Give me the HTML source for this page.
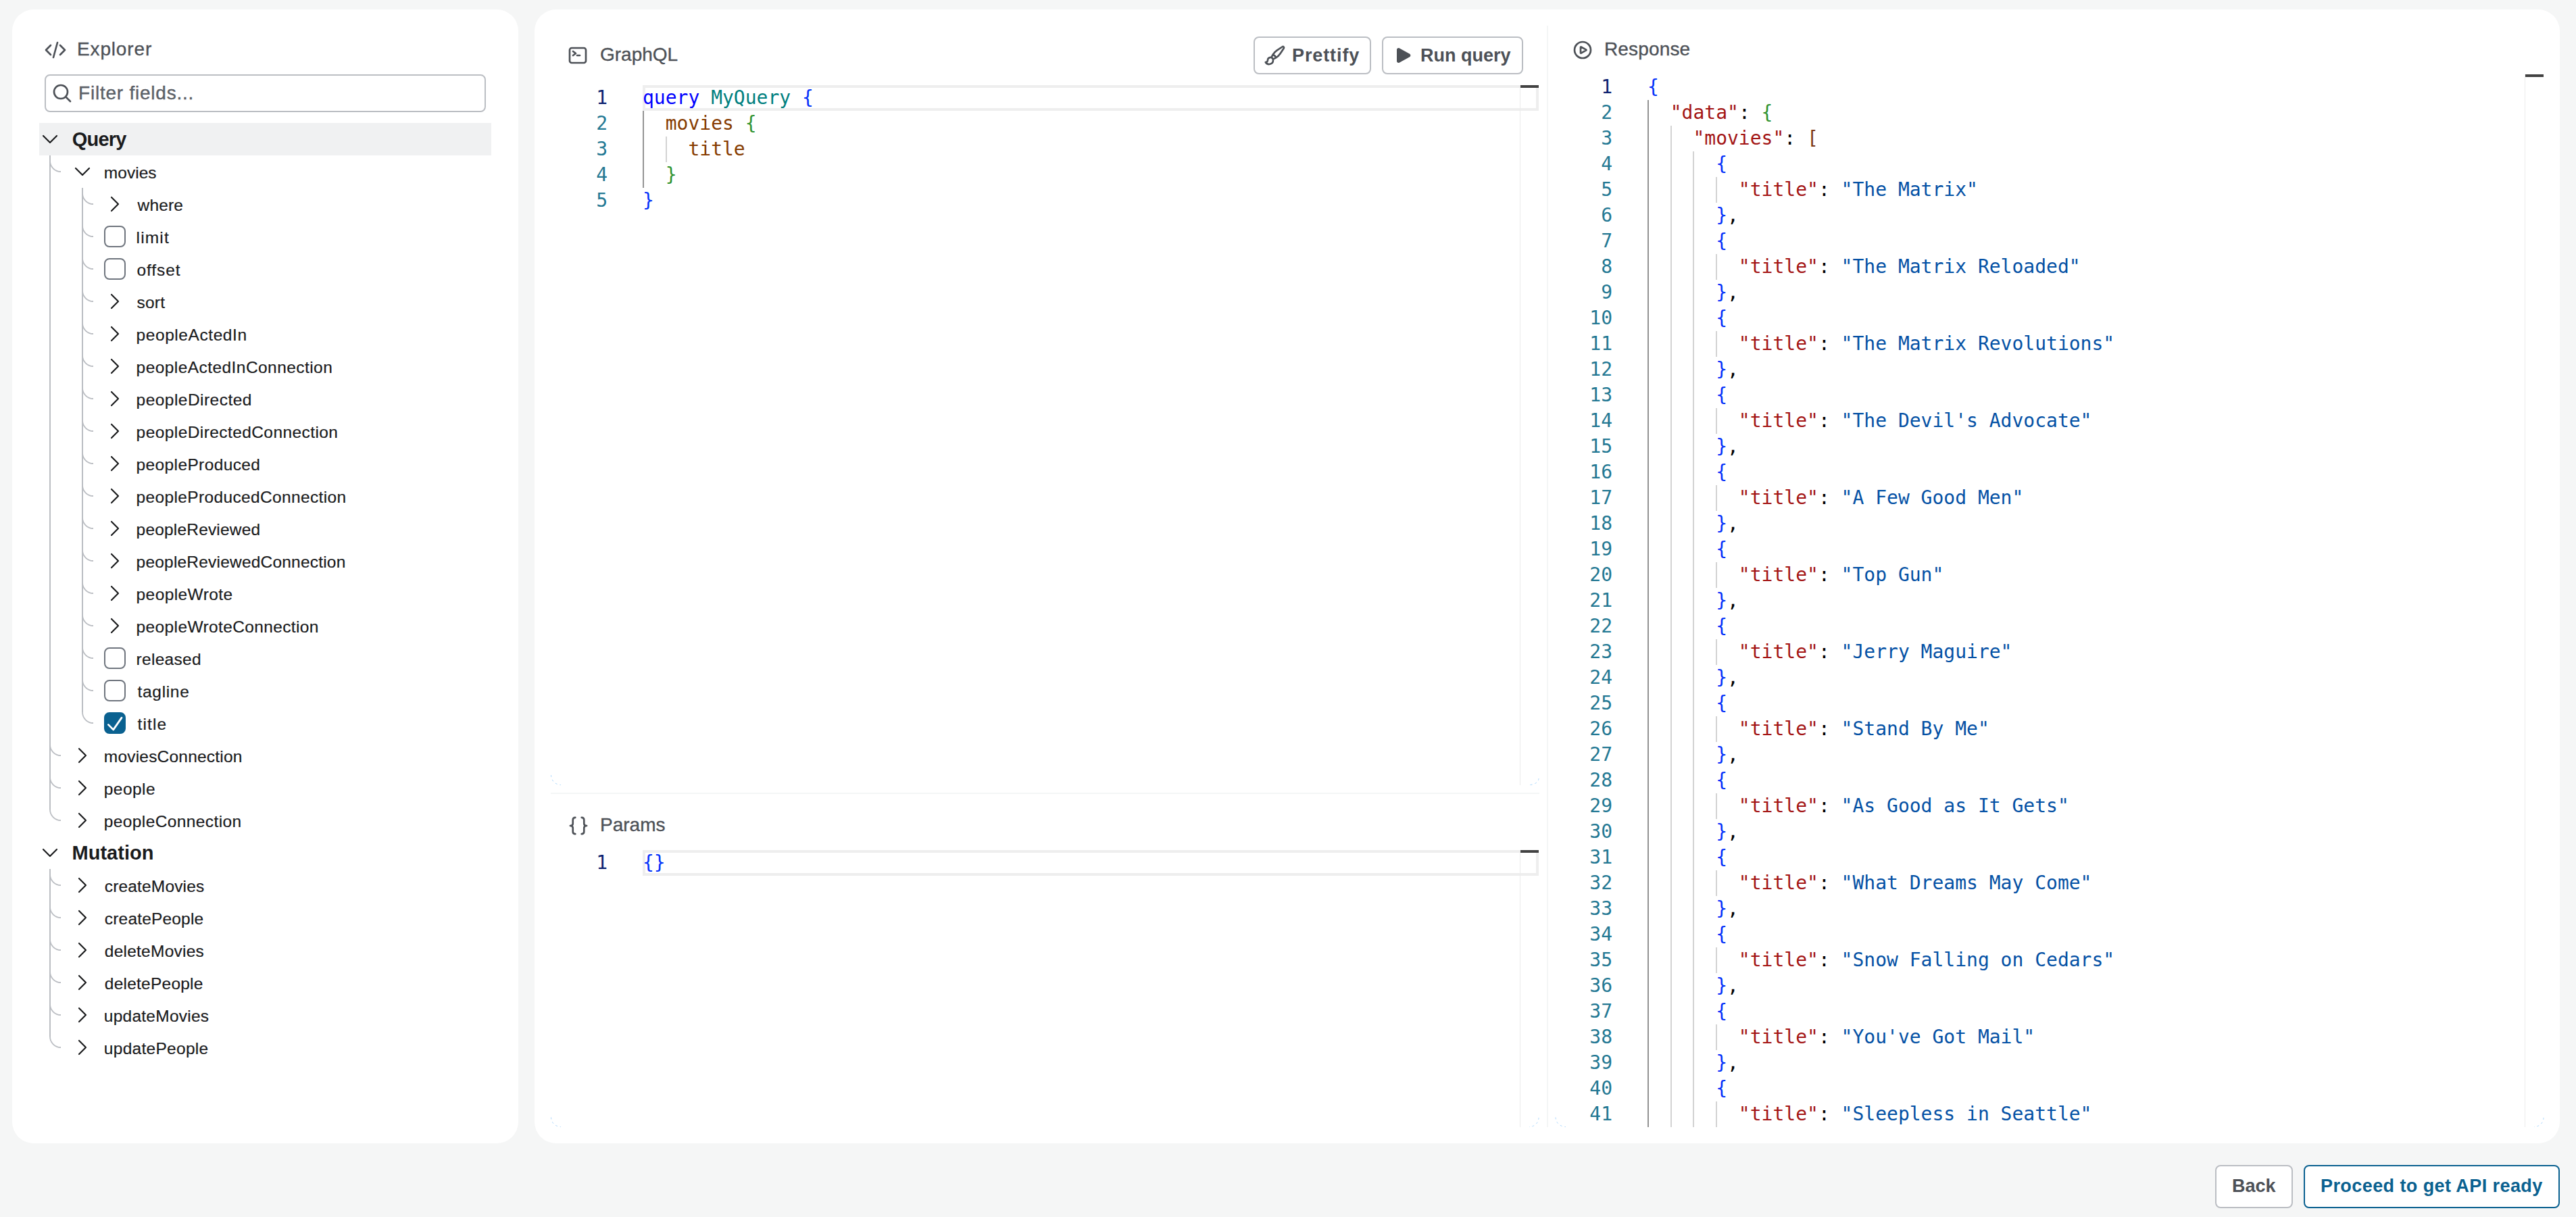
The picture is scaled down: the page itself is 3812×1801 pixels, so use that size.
<!DOCTYPE html>
<html lang="en"><head><meta charset="utf-8"><title>GraphQL Explorer</title>
<meta name="viewport" content="width=3812">
<style>
*{box-sizing:border-box}
html,body{margin:0;padding:0}
body{width:3812px;height:1801px;overflow:hidden;position:relative;background:#f5f6f6;
 font-family:"Liberation Sans",sans-serif;color:#1a1b1d;-webkit-font-smoothing:antialiased}
.abs,.panel,.t,.row,.lbl,.hd,.btn,.ln,.cl,.g,.cb,svg{position:absolute}
.panel{background:#fff;border-radius:32px}
.hd{font-size:28px;line-height:32px;height:32px;color:#4d5157;white-space:nowrap;-webkit-text-stroke:.35px #4d5157}
.lbl{font-size:24.5px;line-height:48px;height:48px;white-space:nowrap;color:#1a1b1d;-webkit-text-stroke:.2px #1a1b1d}
.lbl.b{font-size:29px;font-weight:700;-webkit-text-stroke:0}
.cb{width:32px;height:32px;border:2px solid #6f757e;border-radius:8px;background:#fff}
.cb.on{background:#0a6190;border-color:#0a6190}
.btn{height:56px;border:2px solid #bbbec3;border-radius:8px;background:#fff;color:#4d5157;
 font-weight:700;font-size:27px;line-height:52px;white-space:nowrap}
.btn span{position:absolute;top:0}
.mono{font-family:"DejaVu Sans Mono","Liberation Mono",monospace;font-size:28px;line-height:38px;white-space:pre}
.ln{height:38px;width:80px;text-align:right;color:#237893}
.ln.a{color:#0b216f}
.cl{height:38px;color:#000}
.g{width:2px;background:#d3d3d3}
.g.a{background:#939393}
.kw{color:#0000ff}.ty{color:#008080}.b1{color:#0431fa}.b2{color:#319331}.b3{color:#7b3814}
.id{color:#863b00}.k{color:#a31515}.s{color:#0451a5}.d{color:#000}
.curline{position:absolute;height:38px;border:4px solid #eeeeee}
.mark{position:absolute;height:4px;width:27px;background:#424242}
.vline{position:absolute;width:1px;background:#ebebeb}
</style></head><body>
<div class="panel" style="left:18px;top:14px;width:749px;height:1678px"></div>
<div class="panel" style="left:791px;top:14px;width:2997px;height:1678px"></div>
<svg style="left:66px;top:57.6px" width="32" height="32" viewBox="0 0 24 24" fill="none" stroke="#4d5157" stroke-width="2.0" stroke-linecap="round" stroke-linejoin="round"><path d="M17.25 6.75 22.5 12l-5.25 5.25m-10.5 0L1.5 12l5.25-5.25m7.5-3-4.5 16.5"/></svg>
<div class="hd" style="left:114px;top:57px;letter-spacing:.85px">Explorer</div>
<div class="abs" style="left:66px;top:110px;width:653px;height:56px;border:2px solid #bbbec3;border-radius:8px;background:#fff"></div>
<svg style="left:76px;top:122px" width="32" height="32" viewBox="0 0 24 24" fill="none" stroke="#4d5157" stroke-width="2.0" stroke-linecap="round" stroke-linejoin="round"><path d="m21 21-5.197-5.197m0 0A7.5 7.5 0 1 0 5.196 5.196a7.5 7.5 0 0 0 10.607 10.607Z"/></svg>
<div class="hd" style="left:116px;top:122px;color:#5e636a;letter-spacing:.78px">Filter fields...</div>
<div class="abs" style="left:58px;top:182px;width:669px;height:48px;background:#f0f1f2"></div>
<svg style="left:0;top:0" width="800" height="1700" viewBox="0 0 800 1700" fill="none"><path d="M74 230V1198M122 278V1054M74 1286V1534" stroke="#bbbec3" stroke-width="2"/><path d="M74 238A16 16 0 0 0 90 254M74 1102A16 16 0 0 0 90 1118M74 1150A16 16 0 0 0 90 1166M74 1198A16 16 0 0 0 90 1214M122 286A16 16 0 0 0 138 302M122 334A16 16 0 0 0 138 350M122 382A16 16 0 0 0 138 398M122 430A16 16 0 0 0 138 446M122 478A16 16 0 0 0 138 494M122 526A16 16 0 0 0 138 542M122 574A16 16 0 0 0 138 590M122 622A16 16 0 0 0 138 638M122 670A16 16 0 0 0 138 686M122 718A16 16 0 0 0 138 734M122 766A16 16 0 0 0 138 782M122 814A16 16 0 0 0 138 830M122 862A16 16 0 0 0 138 878M122 910A16 16 0 0 0 138 926M122 958A16 16 0 0 0 138 974M122 1006A16 16 0 0 0 138 1022M122 1054A16 16 0 0 0 138 1070M74 1294A16 16 0 0 0 90 1310M74 1342A16 16 0 0 0 90 1358M74 1390A16 16 0 0 0 90 1406M74 1438A16 16 0 0 0 90 1454M74 1486A16 16 0 0 0 90 1502M74 1534A16 16 0 0 0 90 1550" stroke="#bbbec3" stroke-width="1.8"/></svg>
<svg style="left:58px;top:190px" width="32" height="32" viewBox="0 0 24 24" fill="none" stroke="#1a1b1d" stroke-width="1.6" stroke-linecap="round" stroke-linejoin="round"><path d="m19.5 8.25-7.5 7.5-7.5-7.5"/></svg>
<div class="lbl b" style="left:106.8px;top:182px;letter-spacing:-0.8px">Query</div>
<svg style="left:106px;top:238px" width="32" height="32" viewBox="0 0 24 24" fill="none" stroke="#1a1b1d" stroke-width="1.6" stroke-linecap="round" stroke-linejoin="round"><path d="m19.5 8.25-7.5 7.5-7.5-7.5"/></svg>
<div class="lbl" style="left:153.8px;top:232px;letter-spacing:0.04px">movies</div>
<svg style="left:154px;top:286px" width="32" height="32" viewBox="0 0 24 24" fill="none" stroke="#1a1b1d" stroke-width="1.6" stroke-linecap="round" stroke-linejoin="round"><path d="m8.25 4.5 7.5 7.5-7.5 7.5"/></svg>
<div class="lbl" style="left:203.6px;top:280px;letter-spacing:0.15px">where</div>
<div class="cb" style="left:154px;top:334px"></div>
<div class="lbl" style="left:201.6px;top:328px;letter-spacing:1.15px">limit</div>
<div class="cb" style="left:154px;top:382px"></div>
<div class="lbl" style="left:202.6px;top:376px;letter-spacing:0.88px">offset</div>
<svg style="left:154px;top:430px" width="32" height="32" viewBox="0 0 24 24" fill="none" stroke="#1a1b1d" stroke-width="1.6" stroke-linecap="round" stroke-linejoin="round"><path d="m8.25 4.5 7.5 7.5-7.5 7.5"/></svg>
<div class="lbl" style="left:202.6px;top:424px;letter-spacing:0.201px">sort</div>
<svg style="left:154px;top:478px" width="32" height="32" viewBox="0 0 24 24" fill="none" stroke="#1a1b1d" stroke-width="1.6" stroke-linecap="round" stroke-linejoin="round"><path d="m8.25 4.5 7.5 7.5-7.5 7.5"/></svg>
<div class="lbl" style="left:201.6px;top:472px;letter-spacing:0.564px">peopleActedIn</div>
<svg style="left:154px;top:526px" width="32" height="32" viewBox="0 0 24 24" fill="none" stroke="#1a1b1d" stroke-width="1.6" stroke-linecap="round" stroke-linejoin="round"><path d="m8.25 4.5 7.5 7.5-7.5 7.5"/></svg>
<div class="lbl" style="left:201.6px;top:520px;letter-spacing:0.436px">peopleActedInConnection</div>
<svg style="left:154px;top:574px" width="32" height="32" viewBox="0 0 24 24" fill="none" stroke="#1a1b1d" stroke-width="1.6" stroke-linecap="round" stroke-linejoin="round"><path d="m8.25 4.5 7.5 7.5-7.5 7.5"/></svg>
<div class="lbl" style="left:201.6px;top:568px;letter-spacing:0.462px">peopleDirected</div>
<svg style="left:154px;top:622px" width="32" height="32" viewBox="0 0 24 24" fill="none" stroke="#1a1b1d" stroke-width="1.6" stroke-linecap="round" stroke-linejoin="round"><path d="m8.25 4.5 7.5 7.5-7.5 7.5"/></svg>
<div class="lbl" style="left:201.6px;top:616px;letter-spacing:0.418px">peopleDirectedConnection</div>
<svg style="left:154px;top:670px" width="32" height="32" viewBox="0 0 24 24" fill="none" stroke="#1a1b1d" stroke-width="1.6" stroke-linecap="round" stroke-linejoin="round"><path d="m8.25 4.5 7.5 7.5-7.5 7.5"/></svg>
<div class="lbl" style="left:201.6px;top:664px;letter-spacing:0.372px">peopleProduced</div>
<svg style="left:154px;top:718px" width="32" height="32" viewBox="0 0 24 24" fill="none" stroke="#1a1b1d" stroke-width="1.6" stroke-linecap="round" stroke-linejoin="round"><path d="m8.25 4.5 7.5 7.5-7.5 7.5"/></svg>
<div class="lbl" style="left:201.6px;top:712px;letter-spacing:0.355px">peopleProducedConnection</div>
<svg style="left:154px;top:766px" width="32" height="32" viewBox="0 0 24 24" fill="none" stroke="#1a1b1d" stroke-width="1.6" stroke-linecap="round" stroke-linejoin="round"><path d="m8.25 4.5 7.5 7.5-7.5 7.5"/></svg>
<div class="lbl" style="left:201.6px;top:760px;letter-spacing:0.181px">peopleReviewed</div>
<svg style="left:154px;top:814px" width="32" height="32" viewBox="0 0 24 24" fill="none" stroke="#1a1b1d" stroke-width="1.6" stroke-linecap="round" stroke-linejoin="round"><path d="m8.25 4.5 7.5 7.5-7.5 7.5"/></svg>
<div class="lbl" style="left:201.6px;top:808px;letter-spacing:0.199px">peopleReviewedConnection</div>
<svg style="left:154px;top:862px" width="32" height="32" viewBox="0 0 24 24" fill="none" stroke="#1a1b1d" stroke-width="1.6" stroke-linecap="round" stroke-linejoin="round"><path d="m8.25 4.5 7.5 7.5-7.5 7.5"/></svg>
<div class="lbl" style="left:201.6px;top:856px;letter-spacing:0.4px">peopleWrote</div>
<svg style="left:154px;top:910px" width="32" height="32" viewBox="0 0 24 24" fill="none" stroke="#1a1b1d" stroke-width="1.6" stroke-linecap="round" stroke-linejoin="round"><path d="m8.25 4.5 7.5 7.5-7.5 7.5"/></svg>
<div class="lbl" style="left:201.6px;top:904px;letter-spacing:0.37px">peopleWroteConnection</div>
<div class="cb" style="left:154px;top:958px"></div>
<div class="lbl" style="left:201.6px;top:952px;letter-spacing:0.286px">released</div>
<div class="cb" style="left:154px;top:1006px"></div>
<div class="lbl" style="left:203.6px;top:1000px;letter-spacing:0.665px">tagline</div>
<div class="cb on" style="left:154px;top:1054px"></div>
<svg style="left:154px;top:1054px" width="32" height="32" viewBox="0 0 32 32" fill="none" stroke="#fff" stroke-width="2.75" stroke-linecap="round" stroke-linejoin="round"><path d="M6.3 18.4L13.7 25.9L26 8.1"/></svg>
<div class="lbl" style="left:203.6px;top:1048px;letter-spacing:1.1px">title</div>
<svg style="left:106px;top:1102px" width="32" height="32" viewBox="0 0 24 24" fill="none" stroke="#1a1b1d" stroke-width="1.6" stroke-linecap="round" stroke-linejoin="round"><path d="m8.25 4.5 7.5 7.5-7.5 7.5"/></svg>
<div class="lbl" style="left:153.8px;top:1096px;letter-spacing:0.2px">moviesConnection</div>
<svg style="left:106px;top:1150px" width="32" height="32" viewBox="0 0 24 24" fill="none" stroke="#1a1b1d" stroke-width="1.6" stroke-linecap="round" stroke-linejoin="round"><path d="m8.25 4.5 7.5 7.5-7.5 7.5"/></svg>
<div class="lbl" style="left:153.8px;top:1144px;letter-spacing:0.44px">people</div>
<svg style="left:106px;top:1198px" width="32" height="32" viewBox="0 0 24 24" fill="none" stroke="#1a1b1d" stroke-width="1.6" stroke-linecap="round" stroke-linejoin="round"><path d="m8.25 4.5 7.5 7.5-7.5 7.5"/></svg>
<div class="lbl" style="left:153.8px;top:1192px;letter-spacing:0.385px">peopleConnection</div>
<svg style="left:58px;top:1246px" width="32" height="32" viewBox="0 0 24 24" fill="none" stroke="#1a1b1d" stroke-width="1.6" stroke-linecap="round" stroke-linejoin="round"><path d="m19.5 8.25-7.5 7.5-7.5-7.5"/></svg>
<div class="lbl b" style="left:106.6px;top:1238px;letter-spacing:-0.002px">Mutation</div>
<svg style="left:106px;top:1294px" width="32" height="32" viewBox="0 0 24 24" fill="none" stroke="#1a1b1d" stroke-width="1.6" stroke-linecap="round" stroke-linejoin="round"><path d="m8.25 4.5 7.5 7.5-7.5 7.5"/></svg>
<div class="lbl" style="left:154.8px;top:1288px;letter-spacing:0.159px">createMovies</div>
<svg style="left:106px;top:1342px" width="32" height="32" viewBox="0 0 24 24" fill="none" stroke="#1a1b1d" stroke-width="1.6" stroke-linecap="round" stroke-linejoin="round"><path d="m8.25 4.5 7.5 7.5-7.5 7.5"/></svg>
<div class="lbl" style="left:154.8px;top:1336px;letter-spacing:0.182px">createPeople</div>
<svg style="left:106px;top:1390px" width="32" height="32" viewBox="0 0 24 24" fill="none" stroke="#1a1b1d" stroke-width="1.6" stroke-linecap="round" stroke-linejoin="round"><path d="m8.25 4.5 7.5 7.5-7.5 7.5"/></svg>
<div class="lbl" style="left:154.8px;top:1384px;letter-spacing:0.239px">deleteMovies</div>
<svg style="left:106px;top:1438px" width="32" height="32" viewBox="0 0 24 24" fill="none" stroke="#1a1b1d" stroke-width="1.6" stroke-linecap="round" stroke-linejoin="round"><path d="m8.25 4.5 7.5 7.5-7.5 7.5"/></svg>
<div class="lbl" style="left:154.8px;top:1432px;letter-spacing:0.233px">deletePeople</div>
<svg style="left:106px;top:1486px" width="32" height="32" viewBox="0 0 24 24" fill="none" stroke="#1a1b1d" stroke-width="1.6" stroke-linecap="round" stroke-linejoin="round"><path d="m8.25 4.5 7.5 7.5-7.5 7.5"/></svg>
<div class="lbl" style="left:153.8px;top:1480px;letter-spacing:0.25px">updateMovies</div>
<svg style="left:106px;top:1534px" width="32" height="32" viewBox="0 0 24 24" fill="none" stroke="#1a1b1d" stroke-width="1.6" stroke-linecap="round" stroke-linejoin="round"><path d="m8.25 4.5 7.5 7.5-7.5 7.5"/></svg>
<div class="lbl" style="left:153.8px;top:1528px;letter-spacing:0.29px">updatePeople</div>
<svg style="left:839px;top:66px" width="32" height="32" viewBox="0 0 24 24" fill="none" stroke="#4d5157" stroke-width="2.0" stroke-linecap="round" stroke-linejoin="round"><path d="m6.75 7.5 3 2.25-3 2.25m4.5 0h3m-9 8.25h13.5A2.25 2.25 0 0 0 21 18V6a2.25 2.25 0 0 0-2.25-2.25H5.25A2.25 2.25 0 0 0 3 6v12a2.25 2.25 0 0 0 2.25 2.25Z"/></svg>
<div class="hd" style="left:888px;top:65px">GraphQL</div>
<div class="btn" style="left:1855px;top:54px;width:174px"><span style="left:55px;letter-spacing:.9px">Prettify</span></div>
<svg style="left:1871px;top:66px" width="32" height="32" viewBox="0 0 24 24" fill="none" stroke="#4d5157" stroke-width="2.0" stroke-linecap="round" stroke-linejoin="round"><path d="M9.53 16.122a3 3 0 0 0-5.78 1.128 2.25 2.25 0 0 1-2.4 2.245 4.5 4.5 0 0 0 8.4-2.245c0-.399-.078-.78-.22-1.128Zm0 0a15.998 15.998 0 0 0 3.388-1.62m-5.043-.025a15.994 15.994 0 0 1 1.622-3.395m3.42 3.42a15.995 15.995 0 0 0 4.764-4.648l3.876-5.814a1.151 1.151 0 0 0-1.597-1.597L14.146 6.32a15.996 15.996 0 0 0-4.649 4.763m3.42 3.42a6.776 6.776 0 0 0-3.42-3.42"/></svg>
<div class="btn" style="left:2045px;top:54px;width:209px"><span style="left:55px">Run query</span></div>
<svg style="left:2061px;top:66px" width="32" height="32" viewBox="0 0 24 24" fill="#4d5157" stroke="#4d5157" stroke-width="0" stroke-linecap="round" stroke-linejoin="round"><path d="M4.5 5.653c0-1.427 1.529-2.33 2.779-1.643l11.54 6.347c1.295.712 1.295 2.573 0 3.286L7.28 19.99c-1.25.687-2.779-.217-2.779-1.643V5.653Z"/></svg>
<div class="curline" style="left:951px;top:126px;width:1326px"></div>
<div class="vline" style="left:2249px;top:126px;height:1036px"></div>
<div class="mark" style="left:2250px;top:126px"></div>
<div class="g a" style="left:951px;top:164px;height:114px"></div>
<div class="g" style="left:985px;top:202px;height:38px"></div>
<div class="ln mono a" style="left:819px;top:126px">1</div>
<div class="cl mono" style="left:951px;top:126px"><span class="kw">query</span> <span class="ty">MyQuery</span> <span class="b1">{</span></div>
<div class="ln mono" style="left:819px;top:164px">2</div>
<div class="cl mono" style="left:951px;top:164px">  <span class="id">movies</span> <span class="b2">{</span></div>
<div class="ln mono" style="left:819px;top:202px">3</div>
<div class="cl mono" style="left:951px;top:202px">    <span class="id">title</span></div>
<div class="ln mono" style="left:819px;top:240px">4</div>
<div class="cl mono" style="left:951px;top:240px">  <span class="b2">}</span></div>
<div class="ln mono" style="left:819px;top:278px">5</div>
<div class="cl mono" style="left:951px;top:278px"><span class="b1">}</span></div>
<div class="abs" style="left:815px;top:1173px;width:1463px;height:2px;background:#f4f6f6"></div>
<svg style="left:839.6px;top:1206px" width="32" height="32" viewBox="0 0 24 24" fill="none" stroke="#4d5157" stroke-width="2.0" stroke-linecap="round" stroke-linejoin="round"><path d="M8.5 2.9C6.5 2.9 5.8 3.6 5.8 5.5V9.6C5.8 11.1 4.6 12 2.9 12C4.6 12 5.8 12.9 5.8 14.4V18.5C5.8 20.4 6.5 21.1 8.5 21.1"/><path d="M15.5 2.9C17.5 2.9 18.2 3.6 18.2 5.5V9.6C18.2 11.1 19.4 12 21.1 12C19.4 12 18.2 12.9 18.2 14.4V18.5C18.2 20.4 17.5 21.1 15.5 21.1"/></svg>
<div class="hd" style="left:888px;top:1205px">Params</div>
<div class="curline" style="left:951px;top:1258px;width:1326px"></div>
<div class="vline" style="left:2249px;top:1258px;height:410px"></div>
<div class="mark" style="left:2250px;top:1258px"></div>
<div class="ln mono a" style="left:819px;top:1258px">1</div>
<div class="cl mono" style="left:951px;top:1258px"><span class="b1">{}</span></div>
<div class="vline" style="left:2289px;top:38px;height:1630px;width:2px;background:#f4f6f6"></div>
<svg style="left:2326px;top:58px" width="32" height="32" viewBox="0 0 24 24" fill="none" stroke="#4d5157" stroke-width="2.0" stroke-linecap="round" stroke-linejoin="round"><path d="M21 12a9 9 0 1 1-18 0 9 9 0 0 1 18 0Z"/><path d="M15.91 11.672a.375.375 0 0 1 0 .656l-5.603 3.113a.375.375 0 0 1-.557-.328V8.887c0-.286.307-.466.557-.327l5.603 3.112Z"/></svg>
<div class="hd" style="left:2374px;top:57px;letter-spacing:.15px">Response</div>
<div class="abs" style="left:2300px;top:110px;width:1480px;height:1558px;overflow:hidden">
<div class="abs" style="left:-2300px;top:-110px;width:0;height:0"><div class="g a" style="left:2438px;top:148px;height:1600px"></div><div class="g" style="left:2472px;top:186px;height:1600px"></div><div class="g" style="left:2505px;top:224px;height:1600px"></div><div class="g" style="left:2539px;top:262px;height:38px"></div><div class="g" style="left:2539px;top:376px;height:38px"></div><div class="g" style="left:2539px;top:490px;height:38px"></div><div class="g" style="left:2539px;top:604px;height:38px"></div><div class="g" style="left:2539px;top:718px;height:38px"></div><div class="g" style="left:2539px;top:832px;height:38px"></div><div class="g" style="left:2539px;top:946px;height:38px"></div><div class="g" style="left:2539px;top:1060px;height:38px"></div><div class="g" style="left:2539px;top:1174px;height:38px"></div><div class="g" style="left:2539px;top:1288px;height:38px"></div><div class="g" style="left:2539px;top:1402px;height:38px"></div><div class="g" style="left:2539px;top:1516px;height:38px"></div><div class="g" style="left:2539px;top:1630px;height:38px"></div><div class="ln mono a" style="left:2306px;top:110px">1</div><div class="cl mono" style="left:2438px;top:110px"><span class="b1">{</span></div><div class="ln mono" style="left:2306px;top:148px">2</div><div class="cl mono" style="left:2438px;top:148px">  <span class="k">"data"</span><span class="d">:</span> <span class="b2">{</span></div><div class="ln mono" style="left:2306px;top:186px">3</div><div class="cl mono" style="left:2438px;top:186px">    <span class="k">"movies"</span><span class="d">:</span> <span class="b3">[</span></div><div class="ln mono" style="left:2306px;top:224px">4</div><div class="cl mono" style="left:2438px;top:224px">      <span class="b1">{</span></div><div class="ln mono" style="left:2306px;top:262px">5</div><div class="cl mono" style="left:2438px;top:262px">        <span class="k">"title"</span><span class="d">:</span> <span class="s">"The Matrix"</span></div><div class="ln mono" style="left:2306px;top:300px">6</div><div class="cl mono" style="left:2438px;top:300px">      <span class="b1">}</span><span class="d">,</span></div><div class="ln mono" style="left:2306px;top:338px">7</div><div class="cl mono" style="left:2438px;top:338px">      <span class="b1">{</span></div><div class="ln mono" style="left:2306px;top:376px">8</div><div class="cl mono" style="left:2438px;top:376px">        <span class="k">"title"</span><span class="d">:</span> <span class="s">"The Matrix Reloaded"</span></div><div class="ln mono" style="left:2306px;top:414px">9</div><div class="cl mono" style="left:2438px;top:414px">      <span class="b1">}</span><span class="d">,</span></div><div class="ln mono" style="left:2306px;top:452px">10</div><div class="cl mono" style="left:2438px;top:452px">      <span class="b1">{</span></div><div class="ln mono" style="left:2306px;top:490px">11</div><div class="cl mono" style="left:2438px;top:490px">        <span class="k">"title"</span><span class="d">:</span> <span class="s">"The Matrix Revolutions"</span></div><div class="ln mono" style="left:2306px;top:528px">12</div><div class="cl mono" style="left:2438px;top:528px">      <span class="b1">}</span><span class="d">,</span></div><div class="ln mono" style="left:2306px;top:566px">13</div><div class="cl mono" style="left:2438px;top:566px">      <span class="b1">{</span></div><div class="ln mono" style="left:2306px;top:604px">14</div><div class="cl mono" style="left:2438px;top:604px">        <span class="k">"title"</span><span class="d">:</span> <span class="s">"The Devil's Advocate"</span></div><div class="ln mono" style="left:2306px;top:642px">15</div><div class="cl mono" style="left:2438px;top:642px">      <span class="b1">}</span><span class="d">,</span></div><div class="ln mono" style="left:2306px;top:680px">16</div><div class="cl mono" style="left:2438px;top:680px">      <span class="b1">{</span></div><div class="ln mono" style="left:2306px;top:718px">17</div><div class="cl mono" style="left:2438px;top:718px">        <span class="k">"title"</span><span class="d">:</span> <span class="s">"A Few Good Men"</span></div><div class="ln mono" style="left:2306px;top:756px">18</div><div class="cl mono" style="left:2438px;top:756px">      <span class="b1">}</span><span class="d">,</span></div><div class="ln mono" style="left:2306px;top:794px">19</div><div class="cl mono" style="left:2438px;top:794px">      <span class="b1">{</span></div><div class="ln mono" style="left:2306px;top:832px">20</div><div class="cl mono" style="left:2438px;top:832px">        <span class="k">"title"</span><span class="d">:</span> <span class="s">"Top Gun"</span></div><div class="ln mono" style="left:2306px;top:870px">21</div><div class="cl mono" style="left:2438px;top:870px">      <span class="b1">}</span><span class="d">,</span></div><div class="ln mono" style="left:2306px;top:908px">22</div><div class="cl mono" style="left:2438px;top:908px">      <span class="b1">{</span></div><div class="ln mono" style="left:2306px;top:946px">23</div><div class="cl mono" style="left:2438px;top:946px">        <span class="k">"title"</span><span class="d">:</span> <span class="s">"Jerry Maguire"</span></div><div class="ln mono" style="left:2306px;top:984px">24</div><div class="cl mono" style="left:2438px;top:984px">      <span class="b1">}</span><span class="d">,</span></div><div class="ln mono" style="left:2306px;top:1022px">25</div><div class="cl mono" style="left:2438px;top:1022px">      <span class="b1">{</span></div><div class="ln mono" style="left:2306px;top:1060px">26</div><div class="cl mono" style="left:2438px;top:1060px">        <span class="k">"title"</span><span class="d">:</span> <span class="s">"Stand By Me"</span></div><div class="ln mono" style="left:2306px;top:1098px">27</div><div class="cl mono" style="left:2438px;top:1098px">      <span class="b1">}</span><span class="d">,</span></div><div class="ln mono" style="left:2306px;top:1136px">28</div><div class="cl mono" style="left:2438px;top:1136px">      <span class="b1">{</span></div><div class="ln mono" style="left:2306px;top:1174px">29</div><div class="cl mono" style="left:2438px;top:1174px">        <span class="k">"title"</span><span class="d">:</span> <span class="s">"As Good as It Gets"</span></div><div class="ln mono" style="left:2306px;top:1212px">30</div><div class="cl mono" style="left:2438px;top:1212px">      <span class="b1">}</span><span class="d">,</span></div><div class="ln mono" style="left:2306px;top:1250px">31</div><div class="cl mono" style="left:2438px;top:1250px">      <span class="b1">{</span></div><div class="ln mono" style="left:2306px;top:1288px">32</div><div class="cl mono" style="left:2438px;top:1288px">        <span class="k">"title"</span><span class="d">:</span> <span class="s">"What Dreams May Come"</span></div><div class="ln mono" style="left:2306px;top:1326px">33</div><div class="cl mono" style="left:2438px;top:1326px">      <span class="b1">}</span><span class="d">,</span></div><div class="ln mono" style="left:2306px;top:1364px">34</div><div class="cl mono" style="left:2438px;top:1364px">      <span class="b1">{</span></div><div class="ln mono" style="left:2306px;top:1402px">35</div><div class="cl mono" style="left:2438px;top:1402px">        <span class="k">"title"</span><span class="d">:</span> <span class="s">"Snow Falling on Cedars"</span></div><div class="ln mono" style="left:2306px;top:1440px">36</div><div class="cl mono" style="left:2438px;top:1440px">      <span class="b1">}</span><span class="d">,</span></div><div class="ln mono" style="left:2306px;top:1478px">37</div><div class="cl mono" style="left:2438px;top:1478px">      <span class="b1">{</span></div><div class="ln mono" style="left:2306px;top:1516px">38</div><div class="cl mono" style="left:2438px;top:1516px">        <span class="k">"title"</span><span class="d">:</span> <span class="s">"You've Got Mail"</span></div><div class="ln mono" style="left:2306px;top:1554px">39</div><div class="cl mono" style="left:2438px;top:1554px">      <span class="b1">}</span><span class="d">,</span></div><div class="ln mono" style="left:2306px;top:1592px">40</div><div class="cl mono" style="left:2438px;top:1592px">      <span class="b1">{</span></div><div class="ln mono" style="left:2306px;top:1630px">41</div><div class="cl mono" style="left:2438px;top:1630px">        <span class="k">"title"</span><span class="d">:</span> <span class="s">"Sleepless in Seattle"</span></div></div>
</div>
<div class="vline" style="left:3736px;top:110px;height:1558px"></div>
<div class="mark" style="left:3737px;top:110px"></div>
<svg style="left:0;top:0;pointer-events:none" width="3812" height="1700" viewBox="0 0 3812 1700" fill="none"><path d="M815.5 1147A14.5 14.5 0 0 0 830 1161.5M2277 1152A14 9.5 0 0 1 2263 1161.5M815.5 1653.5A14.5 14 0 0 0 830 1667.5M2277 1654A14 13.5 0 0 1 2263 1667.5M2302 1653.5A15 14 0 0 0 2317 1667.5M3764 1654A14 13.5 0 0 1 3750 1667.5" stroke="#90caf9" stroke-opacity=".75" stroke-width="1" stroke-dasharray="3 4"/></svg>
<div class="btn" style="left:3278px;top:1724px;width:115px;height:64px;line-height:59px;font-size:27px"><span style="left:23px">Back</span></div>
<div class="btn" style="left:3409px;top:1724px;width:379px;height:64px;line-height:59px;font-size:27px;border-color:#0a6190;color:#0a6190"><span style="left:23px;letter-spacing:.42px">Proceed to get API ready</span></div>
</body></html>
